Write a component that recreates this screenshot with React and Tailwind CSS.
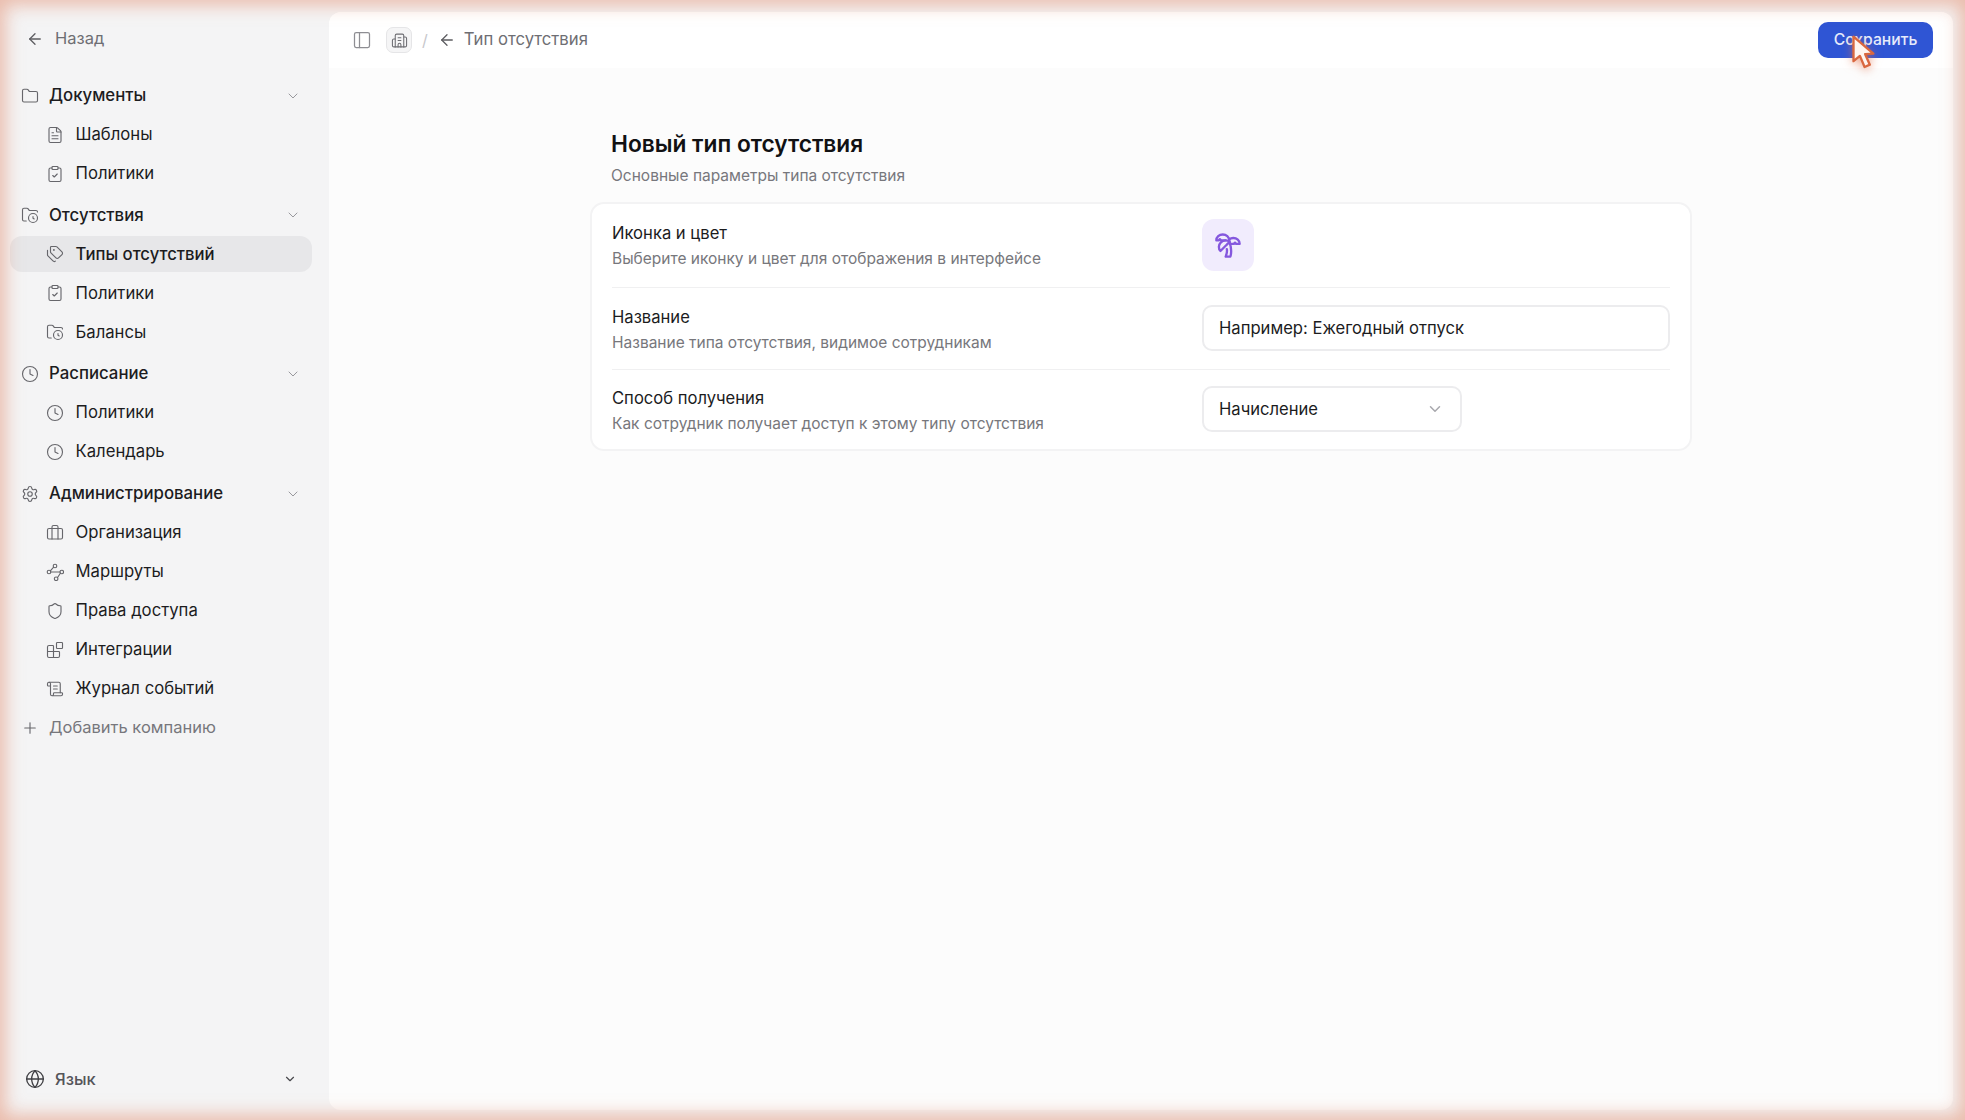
import React from "react";
import {
  ArrowLeft,
  Blocks,
  Briefcase,
  Building2,
  ChevronDown,
  ClipboardCheck,
  Clock,
  FileText,
  Folder,
  FolderClock,
  Globe,
  PanelLeft,
  Plus,
  ScrollText,
  Settings,
  Shield,
  Tags,
  TreePalm,
} from "lucide-react";

const RouteIcon = ({ size, strokeWidth, className }) => {
  return (
    <svg
      width={size}
      height={size}
      viewBox="0 0 24 24"
      fill="none"
      stroke="currentColor"
      strokeWidth={strokeWidth}
      strokeLinecap="round"
      className={className}
    >
      <circle cx="4" cy="12" r="2.4" />
      <circle cx="21" cy="12" r="2.4" />
      <circle cx="12" cy="4" r="2.4" />
      <circle cx="13.5" cy="21" r="2.4" />
      <path d="M6.4 12H18.6M10.2 5.6 5.8 10.4M15.4 19.4 19.2 13.6" />
    </svg>
  );
};

const navGroups = [
  {
    label: "Документы",
    icon: Folder,
    items: [
      { label: "Шаблоны", icon: FileText },
      { label: "Политики", icon: ClipboardCheck },
    ],
  },
  {
    label: "Отсутствия",
    icon: FolderClock,
    items: [
      { label: "Типы отсутствий", icon: Tags, active: true },
      { label: "Политики", icon: ClipboardCheck },
      { label: "Балансы", icon: FolderClock },
    ],
  },
  {
    label: "Расписание",
    icon: Clock,
    items: [
      { label: "Политики", icon: Clock },
      { label: "Календарь", icon: Clock },
    ],
  },
  {
    label: "Администрирование",
    icon: Settings,
    items: [
      { label: "Организация", icon: Briefcase },
      { label: "Маршруты", icon: RouteIcon },
      { label: "Права доступа", icon: Shield },
      { label: "Интеграции", icon: Blocks },
      { label: "Журнал событий", icon: ScrollText },
    ],
  },
];

const rows = [
  {
    title: "Иконка и цвет",
    hint: "Выберите иконку и цвет для отображения в интерфейсе",
    height: "h-[84px]",
    textClass: "w-[590px] shrink-0 pb-[2px]",
    control: (
      <div className="flex h-[52px] w-[52px] items-center justify-center rounded-xl bg-[#f1ecfd]">
        <TreePalm size={28} strokeWidth={2} className="text-[#8558de]" />
      </div>
    ),
  },
  {
    title: "Название",
    hint: "Название типа отсутствия, видимое сотрудникам",
    height: "h-[82px]",
    textClass: "w-[590px] shrink-0",
    control: (
      <div className="flex h-[46px] w-full items-center rounded-[10px] border-2 border-[#ececee] bg-white px-[15px] text-[16.6px] text-[#1c1c1e]">
        Например: Ежегодный отпуск
      </div>
    ),
  },
  {
    title: "Способ получения",
    hint: "Как сотрудник получает доступ к этому типу отсутствия",
    height: "h-[79px]",
    textClass: "w-[590px] shrink-0",
    control: (
      <div className="flex h-[46px] w-[260px] items-center justify-between rounded-[10px] border-2 border-[#ececee] bg-white pl-[15px] pr-[16px] text-[16.6px] text-[#1c1c1e]">
        Начисление
        <ChevronDown size={18} className="text-[#a8a8ad]" />
      </div>
    ),
  },
];

const Sidebar = () => {
  return (
    <aside className="flex h-full w-[329px] shrink-0 flex-col">
      <div className="flex h-[77.6px] items-center pl-[26px] text-[16.5px] text-[#6e6e73]">
        <ArrowLeft size={18} strokeWidth={1.75} className="text-[#5c5c60]" />
        <span className="ml-[11px]">Назад</span>
      </div>
      <nav className="flex flex-col gap-[5.7px] pl-[10px] pr-[17px]">
        {navGroups.map((group) => (
          <div key={group.label} className="flex flex-col gap-[3px]">
            <div className="flex h-9 items-center justify-between pl-[11px] pr-[11px]">
              <div className="flex items-center gap-[10px]">
                <group.icon size={18} strokeWidth={1.5} className="text-[#66666b]" />
                <span className="text-[16.8px] font-medium text-[#1c1c1e]">{group.label}</span>
              </div>
              <ChevronDown size={16} strokeWidth={1.5} className="text-[#98989d]" />
            </div>
            {group.items.map((item) => (
              <div
                key={item.label}
                className={
                  item.active
                    ? "flex h-9 items-center gap-[11.5px] rounded-[12px] bg-[#e7e7e9] pl-[36px] text-[16.7px] font-medium text-[#1c1c1e]"
                    : "flex h-9 items-center gap-[11.5px] pl-[36px] text-[16.7px] text-[#1c1c1e]"
                }
              >
                <item.icon size={18} strokeWidth={1.5} className="text-[#66666b]" />
                <span>{item.label}</span>
              </div>
            ))}
          </div>
        ))}
        <div className="-mt-[2.7px] flex h-9 items-center gap-[10px] pl-[11px] text-[16.5px] text-[#77777c]">
          <Plus size={18} strokeWidth={1.5} className="text-[#66666b]" />
          <span>Добавить компанию</span>
        </div>
      </nav>
      <div className="mt-auto mb-[23px] flex h-9 items-center justify-between pl-[25px] pr-[32px]">
        <div className="flex items-center gap-[10px]">
          <Globe size={20} strokeWidth={1.6} className="text-[#3f3f43]" />
          <span className="text-[16.5px] font-medium text-[#55555a]">Язык</span>
        </div>
        <ChevronDown size={14} strokeWidth={2} className="text-[#48484c]" />
      </div>
    </aside>
  );
};

const TopBar = () => {
  return (
    <header className="flex h-[56px] shrink-0 items-center justify-between bg-white pl-[23px] pr-[20px]">
      <div className="flex items-center">
        <PanelLeft size={20} strokeWidth={1.5} className="text-[#8e8e93]" />
        <div className="ml-[14px] flex h-[26px] w-[26px] items-center justify-center rounded-[7px] border border-[#e5e5e7] bg-[#f5f5f6]">
          <Building2 size={17} strokeWidth={1.5} className="text-[#6e6e73]" />
        </div>
        <span className="ml-[10px] text-[16px] text-[#c7c7cc]">/</span>
        <ArrowLeft size={18} strokeWidth={1.75} className="ml-[10px] text-[#5c5c60]" />
        <span className="ml-[8px] text-[16.7px] text-[#6e6e73]">Тип отсутствия</span>
      </div>
      <button className="flex h-9 w-[115px] items-center justify-center rounded-[10px] bg-[#2f55d4] text-[15.7px] font-medium text-[#e6ebfb]">
        Сохранить
      </button>
    </header>
  );
};

const Cursor = () => {
  return (
    <svg
      viewBox="0 0 24 32"
      className="absolute left-[1850px] top-[34px] h-[38px] w-[28px] drop-shadow-[0_2px_5px_rgba(226,110,70,0.6)]"
    >
      <path
        d="M3 2 L3 23 L8.5 18.5 L12.5 28 L17 26 L13 17 L20 16.5 Z"
        fill="#fff5f0"
        stroke="#d9673f"
        strokeWidth="2"
        strokeLinejoin="round"
      />
    </svg>
  );
};

export default function App() {
  return (
    <div className="relative flex h-screen w-full overflow-hidden bg-[#f4f4f5] font-['Inter',sans-serif]">
      <Sidebar />
      <main className="mt-[12px] mb-[10px] mr-[12px] flex min-w-0 flex-1 flex-col overflow-hidden rounded-[12px] bg-[#fcfcfc]">
        <TopBar />
        <div className="mx-auto mt-[61px] w-[1102px]">
          <div className="px-[21px]">
            <h1 className="text-[22.7px] leading-[30px] font-semibold text-[#111113]">Новый тип отсутствия</h1>
            <p className="mt-[7px] text-[15.5px] leading-[20px] text-[#77777c]">Основные параметры типа отсутствия</p>
          </div>
          <div className="mt-[16px] rounded-[14px] border-2 border-[#f3f3f4] bg-white px-[20px]">
            {rows.map((row, index) => (
              <div
                key={row.title}
                className={
                  index < rows.length - 1
                    ? `${row.height} flex items-center border-b border-[#f0f0f1]`
                    : `${row.height} flex items-center`
                }
              >
                <div className={row.textClass}>
                  <p className="text-[16.6px] leading-[24px] text-[#1c1c1e]">{row.title}</p>
                  <p className="mt-[4px] text-[15.5px] leading-[20px] text-[#77777c]">{row.hint}</p>
                </div>
                <div className="flex-1 pb-[1px]">{row.control}</div>
              </div>
            ))}
          </div>
        </div>
      </main>
      <Cursor />
      <div className="pointer-events-none absolute inset-0 shadow-[inset_0_0_18px_5px_rgba(226,140,110,0.55)]" />
    </div>
  );
}
